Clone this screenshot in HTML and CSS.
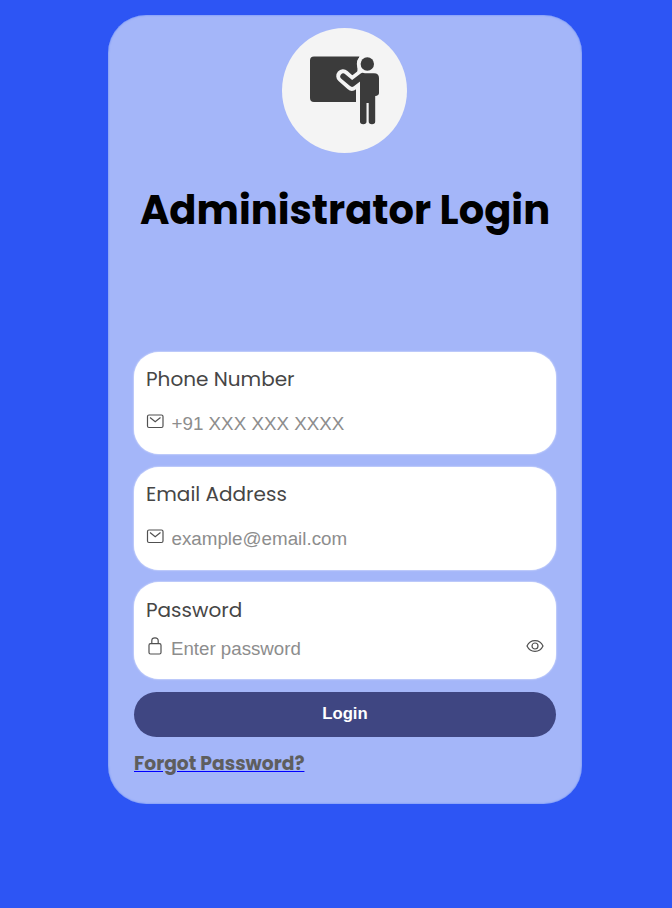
FILE: index.html
```html
<!DOCTYPE html>
<html lang="en">
<head>
<meta charset="utf-8">
<title>Administrator Login</title>
<link rel="stylesheet" href="styles.css">
</head>
<body>
<main class="card">
  <svg class="avatar" viewBox="0 0 125 125" aria-hidden="true">
    <circle cx="62.5" cy="62.5" r="62.5" fill="#f4f4f4"/>
    <path fill="#3b3b3b" d="M32 28.500H77.500L75 34L75.500 40L74 74H32Q28 74 28 70V32.500Q28 28.500 32 28.500Z"/>
    <circle cx="85.300" cy="36" r="10.500" fill="#f4f4f4"/>
    <path d="M61 48L70 56L81 47.500" fill="none" stroke="#f4f4f4" stroke-width="13.500" stroke-linecap="round" stroke-linejoin="round"/>
    <path fill="#f4f4f4" d="M74 57H80V76H74Z"/>
    <circle cx="85.300" cy="36" r="6.700" fill="#3b3b3b"/>
    <path d="M61.300 48.500L70 55.800L80.500 47.800" fill="none" stroke="#3b3b3b" stroke-width="6" stroke-linecap="round" stroke-linejoin="round"/>
    <path fill="#3b3b3b" d="M80 45.200H92Q97 45.200 97 50V65Q97 67.500 93.200 68V93.500Q93.200 96.300 90 96.300Q86.700 96.300 86.700 93.500V75H84.500V93.500Q84.500 96.300 81.300 96.300Q78 96.300 78 93.500V48Z"/>
  </svg>
  <h1 class="title"><span>Administrator Login</span></h1>
  <form class="form">
    <div class="field">
      <label class="label" for="phone">Phone Number</label>
      <div class="entry">
        <svg class="icon" viewBox="0 0 18 18" aria-hidden="true"><rect x="1.500" y="3" width="15.500" height="12.500" rx="1.500"/><path d="M4 5.500L9.200 9.700L14.500 5.500"/></svg>
        <input class="input" id="phone" type="tel" placeholder="+91 XXX XXX XXXX">
      </div>
    </div>
    <div class="field email">
      <label class="label" for="email">Email Address</label>
      <div class="entry">
        <svg class="icon" viewBox="0 0 18 18" aria-hidden="true"><rect x="1.500" y="3" width="15.500" height="12.500" rx="1.500"/><path d="M4 5.500L9.200 9.700L14.500 5.500"/></svg>
        <input class="input" id="email" type="email" placeholder="example@email.com">
      </div>
    </div>
    <div class="field password">
      <label class="label" for="password">Password</label>
      <div class="entry">
        <svg class="icon" viewBox="0 0 18 18" aria-hidden="true"><rect x="3" y="6.700" width="12" height="10.300" rx="1.500"/><path d="M5.800 6.700V3.700Q5.800 .8 9 .8Q12.200 .8 12.200 3.700V6.700"/></svg>
        <input class="input" id="password" type="password" placeholder="Enter password">
        <svg class="icon" viewBox="0 0 18 18" aria-hidden="true"><path d="M1 9Q3.500 3.700 9 3.700T17 9Q14.500 14.300 9 14.300T1 9Z"/><circle cx="9" cy="9" r="3"/></svg>
      </div>
    </div>
    <button class="submit" type="button">Login</button>
  </form>
  <a class="forgot" href="#"><span>Forgot Password?</span></a>
</main>
</body>
</html>
```
FILE: styles.css
```css
* {
  box-sizing: border-box;
}

body {
  margin: 0;
  min-height: 908px;
  padding: 15px 90px 0 108px;
  background: #2d55f4;
  font-family: Poppins, Inter, sans-serif;
}

.card {
  width: 474px;
  height: 789px;
  padding: 13px 26px 0;
  border-radius: 38px;
  background: #a4b6f9;
  box-shadow: inset 0 0 2px #507bf5;
}

.avatar {
  display: block;
  width: 125px;
  height: 125px;
  margin: 0 auto 0 148px;
}

.title {
  margin: 27px -12px 0;
  height: 60px;
  font-size: 40px;
  font-weight: 700;
  line-height: 60px;
  text-align: center;
  white-space: nowrap;
  color: #000;
}

.form {
  display: flex;
  flex-direction: column;
  margin-top: 112px;
}

.field {
  height: 102px;
  margin-bottom: 13px;
  padding: 12px 12px 0;
  border-radius: 25px;
  background: #fff;
  box-shadow: 0 0 2px #fff;
}

.email {
  height: 103px;
  margin-bottom: 12px;
}

.password {
  height: 97px;
  margin-bottom: 13px;
  padding-top: 13px;
}

.label {
  display: block;
  height: 30px;
  font-size: 20px;
  line-height: 30px;
  color: #464646;
}

.entry {
  display: flex;
  align-items: center;
  height: 28px;
  margin-top: 15px;
}

.password .entry {
  margin-top: 9px;
}

.icon {
  flex: none;
  width: 18px;
  height: 18px;
  margin-top: -4px;
  fill: none;
  stroke: #505050;
  stroke-width: 1.200;
}

.input {
  flex: 1;
  min-width: 0;
  margin: 1px 0 0 7.500px;
  padding: 0;
  border: 0;
  outline: 0;
  background: none;
  font: 18.800px/24px "Liberation Sans", Arial, sans-serif;
}

.password .input {
  margin-left: 7px;
  font-size: 18.700px;
}

.input::placeholder {
  color: #8d8d8d;
}

.submit {
  height: 45px;
  padding: 0 0 2px;
  border: 0;
  border-radius: 22.500px;
  background: #3f4682;
  color: #fff;
  font: 700 16.700px/20px "Liberation Sans", Arial, sans-serif;
}

.forgot {
  display: block;
  width: max-content;
  margin-top: 13px;
  font-size: 18.720px;
  font-weight: 700;
  line-height: 28px;
  color: #00f;
}

.forgot span {
  color: #5e5e5e;
}
```
